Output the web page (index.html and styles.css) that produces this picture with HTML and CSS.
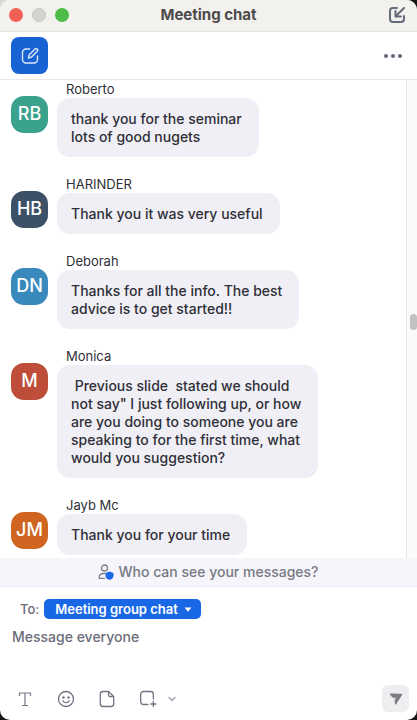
FILE: index.html
```html
<!DOCTYPE html>
<html lang="en">
<head>
  <meta charset="UTF-8">
  <meta name="viewport" content="width=device-width, initial-scale=1.0">
  <title>Meeting chat</title>
  <link rel="stylesheet" href="styles.css">
</head>
<body>

  <div class="window">
    <header class="titlebar">
      <div class="lights">
        <button type="button" class="light close" aria-label="Close"></button>
        <button type="button" class="light minimize" aria-label="Minimize"></button>
        <button type="button" class="light maximize" aria-label="Maximize"></button>
      </div>
      <h1>Meeting chat</h1>
      <button type="button" class="icon-btn merge" aria-label="Merge to meeting window">
        <svg width="18" height="18" viewBox="0 0 18 18" fill="none" stroke="#636b78" stroke-width="2" stroke-linecap="round" stroke-linejoin="round">
          <path d="M9 2H5a3 3 0 0 0-3 3v8a3 3 0 0 0 3 3h8a3 3 0 0 0 3-3v-3"/>
          <path d="M16 2L8 10M7.500 5v5.500H13"/>
        </svg>
      </button>
    </header>

    <div class="toolbar">
      <button type="button" class="compose" aria-label="New chat">
        <svg width="18" height="18" viewBox="0 0 18 18" fill="none" stroke="#dce8fb" stroke-width="1.400" stroke-linecap="round" stroke-linejoin="round">
          <path d="M8.500 2H5a3.500 3.500 0 0 0-3.500 3.500v7A3.500 3.500 0 0 0 5 16h8a3.500 3.500 0 0 0 3.500-3.500V9"/>
          <path d="M7.500 11l.6-3 5.900-5.900a1.500 1.500 0 0 1 2.200 2.200l-5.900 5.900z"/>
        </svg>
      </button>
      <button type="button" class="icon-btn" aria-label="More">
        <svg width="20" height="6" viewBox="0 0 20 6" fill="#5f6678">
          <circle cx="3" cy="3" r="2"/>
          <circle cx="10" cy="3" r="2"/>
          <circle cx="17" cy="3" r="2"/>
        </svg>
      </button>
    </div>

    <main class="chat">
      <div class="messages">
        <div class="message">
          <span class="avatar green">RB</span>
          <div class="content">
            <h2>Roberto</h2>
            <p class="bubble">thank you for the seminar<br>lots of good nugets</p>
          </div>
        </div>
        <div class="message">
          <span class="avatar slate">HB</span>
          <div class="content">
            <h2>HARINDER</h2>
            <p class="bubble">Thank you it was very useful</p>
          </div>
        </div>
        <div class="message">
          <span class="avatar blue">DN</span>
          <div class="content">
            <h2>Deborah</h2>
            <p class="bubble">Thanks for all the info. The best<br>advice is to get started!!</p>
          </div>
        </div>
        <div class="message">
          <span class="avatar red">M</span>
          <div class="content">
            <h2>Monica</h2>
            <p class="bubble"> Previous slide  stated we should<br>not say" I just following up, or how<br>are you doing to someone you are<br>speaking to for the first time, what<br>would you suggestion?</p>
          </div>
        </div>
        <div class="message">
          <span class="avatar orange">JM</span>
          <div class="content">
            <h2>Jayb Mc</h2>
            <p class="bubble">Thank you for your time</p>
          </div>
        </div>
      </div>
      <div class="scrollbar"><div class="thumb"></div></div>
    </main>

    <button type="button" class="notice">
      <svg width="16" height="16" viewBox="0 0 16 16">
        <g fill="none" stroke="#7c7e88" stroke-width="1.300" stroke-linecap="round">
          <circle cx="6.500" cy="4" r="3"/>
          <path d="M6.500 14.300H1.200c-.4-3 1.300-4.800 4.300-4.800h1.500"/>
        </g>
        <path fill="#1767e8" d="M11.500 7.500l4 1.500v3c0 2-1.700 3.300-4 4-2.300-.7-4-2-4-4V9z"/>
      </svg>
      Who can see your messages?
    </button>

    <form class="composer">
      <div class="recipient">
        <label for="to">To:</label>
        <div class="select">
          <select id="to">
            <option>Meeting group chat</option>
          </select>
          <svg width="8" height="5" viewBox="0 0 8 5" fill="#fff"><path d="M.5.500h7L4 4.800z"/></svg>
        </div>
      </div>
      <textarea aria-label="Message" placeholder="Message everyone"></textarea>
      <div class="actions">
        <button type="button" class="icon-btn" aria-label="Format">
          <svg width="18" height="18" viewBox="0 0 18 18" fill="none" stroke="#777786" stroke-width="1.200">
            <path d="M3.500 6V3h11v3M9 3v12.500M6 15.500h6"/>
          </svg>
        </button>
        <button type="button" class="icon-btn" aria-label="Emoji">
          <svg width="18" height="18" viewBox="0 0 18 18" fill="none" stroke="#737382" stroke-width="1.300" stroke-linecap="round">
            <circle cx="9" cy="9" r="7.500"/>
            <path d="M5.800 10.800c1.400 2.500 5 2.500 6.400 0"/>
            <g fill="#737382" stroke="none"><circle cx="6.500" cy="7.500" r="1.200"/><circle cx="11.500" cy="7.500" r="1.200"/></g>
          </svg>
        </button>
        <button type="button" class="icon-btn" aria-label="File">
          <svg width="18" height="18" viewBox="0 0 18 18" fill="none" stroke="#737382" stroke-width="1.300" stroke-linejoin="round">
            <path d="M10.500 1.500H5A2.700 2.700 0 0 0 2.300 4.200v9.600A2.700 2.700 0 0 0 5 16.500h8a2.700 2.700 0 0 0 2.700-2.700V6.500z"/>
            <path d="M10.500 1.500v3.500a1.500 1.500 0 0 0 1.500 1.500h3.700"/>
          </svg>
        </button>
        <button type="button" class="icon-btn" aria-label="Screenshot">
          <svg width="18" height="18" viewBox="0 0 18 18" fill="none" stroke="#737382" stroke-width="1.300" stroke-linecap="round">
            <path d="M9 14.500H4.500A2.800 2.800 0 0 1 1.700 11.700V4.300A2.800 2.800 0 0 1 4.500 1.500h7A2.800 2.800 0 0 1 14.300 4.300V9"/>
            <path d="M14.300 11.500v5M11.800 14h5"/>
          </svg>
        </button>
        <button type="button" class="icon-btn more" aria-label="Screenshot options">
          <svg width="8" height="6" viewBox="0 0 8 6" fill="none" stroke="#a3a3b2" stroke-width="1.400" stroke-linecap="round" stroke-linejoin="round"><path d="M1 1.500l3 3 3-3"/></svg>
        </button>
        <button type="submit" class="send" aria-label="Send">
          <svg width="14" height="12" viewBox="0 0 14 12" fill="#7b7b84" stroke="#7b7b84" stroke-linejoin="round">
            <path d="M1 1l12 .3L6.500 11.300 6 6.500 9.500 4 4 4.500z"/>
          </svg>
        </button>
      </div>
    </form>
  </div>

</body>
</html>
```
FILE: styles.css
```css
* {
  box-sizing: border-box;
}

body {
  margin: 0;
  background: linear-gradient(135deg, #d8d8d6 20px, #161616 20px);
  font-family: Inter, "Liberation Sans", sans-serif;
  font-size: 14px;
  line-height: 18px;
  font-weight: 500;
  color: #2f2f38;
}

button,
select,
textarea {
  font: inherit;
  padding: 0;
  border: none;
  background: none;
}

svg {
  display: block;
}

h1,
h2,
p {
  margin: 0;
}

.window {
  display: flex;
  flex-direction: column;
  min-height: 100vh;
  background: #fff;
  border-radius: 10px;
  overflow: hidden;
}

.titlebar {
  display: grid;
  grid-template-columns: 1fr auto 1fr;
  align-items: center;
  height: 32px;
  padding: 0 9px 2px;
  background: #f3f1ed;
  border-bottom: 1px solid #e3e2e3;
}

.titlebar h1 {
  font-size: 15px;
  font-weight: 700;
  color: #4b4b4b;
}

.lights {
  display: flex;
  gap: 9px;
}

.light {
  width: 14px;
  height: 14px;
  border-radius: 50%;
}

.close {
  background: #f26055;
}

.minimize {
  background: #d5d4cf;
  border: 1px solid #c5c4c0;
}

.maximize {
  background: #4ebc49;
}

.merge {
  justify-self: end;
  margin-right: 2px;
}

.toolbar {
  display: flex;
  align-items: center;
  justify-content: space-between;
  height: 48px;
  padding: 0 14px 0 11px;
  border-bottom: 1px solid #e8e8ee;
}

.compose {
  display: flex;
  align-items: center;
  justify-content: center;
  width: 37px;
  height: 37px;
  border-radius: 8px;
  background: #1862d4;
}

.chat {
  display: flex;
  flex: 1;
}

.messages {
  display: flex;
  flex: 1;
  flex-direction: column;
  gap: 18px;
  padding: 0 11px 3px;
}

.message {
  display: flex;
  align-items: flex-start;
  gap: 9px;
}

.avatar {
  flex: none;
  width: 37px;
  height: 37px;
  margin-top: 16px;
  border-radius: 13px;
  font-size: 18px;
  line-height: 36px;
  text-align: center;
  color: #fff;
}

.green {
  background: #39a18c;
}

.slate {
  background: #3d5166;
}

.blue {
  background: #3a89bd;
}

.red {
  background: #be4d39;
}

.orange {
  background: #d06522;
}

.message h2 {
  padding-left: 9px;
  font-size: 13px;
  font-weight: 400;
}

.bubble {
  width: fit-content;
  padding: 12px 17px 11px 14px;
  border-radius: 13px;
  background: #f0eff5;
  white-space: pre-wrap;
}

.scrollbar {
  display: flex;
  align-items: center;
  justify-content: center;
  width: 11px;
  padding: 6px 0 0 2px;
  background: #fafafa;
  border-left: 1px solid #e6e6e6;
}

.thumb {
  width: 7px;
  height: 16px;
  border-radius: 4px;
  background: #c1c1c1;
}

.notice {
  display: flex;
  align-items: center;
  justify-content: center;
  gap: 4px;
  height: 29px;
  background: #f5f5fb;
  border-bottom: 1px solid #ebebf1;
  color: #777983;
}

.composer {
  display: flex;
  flex-direction: column;
  padding: 12px 8px 8px 12px;
}

.recipient {
  display: flex;
  align-items: center;
  gap: 5px;
  padding-left: 8px;
  font-size: 13px;
  color: #6b6b7a;
}

.select {
  display: grid;
  align-items: center;
}

.select select {
  grid-area: 1 / 1;
  appearance: none;
  height: 20px;
  padding: 0 23px 0 11px;
  border-radius: 5px;
  background: #1868e6;
  font-weight: 600;
  color: #fff;
}

.select svg {
  grid-area: 1 / 1;
  justify-self: end;
  margin-right: 9px;
  pointer-events: none;
}

.composer textarea {
  height: 66px;
  padding-top: 9px;
  outline: none;
  resize: none;
}

.composer textarea::placeholder {
  color: #6b6b7a;
}

.actions {
  display: flex;
  align-items: center;
  gap: 23px;
  padding-left: 4px;
}

.more {
  margin-left: -12px;
}

.send {
  display: flex;
  align-items: center;
  justify-content: center;
  width: 27px;
  height: 27px;
  margin-left: auto;
  border-radius: 6px;
  background: #eeeef0;
}
```
